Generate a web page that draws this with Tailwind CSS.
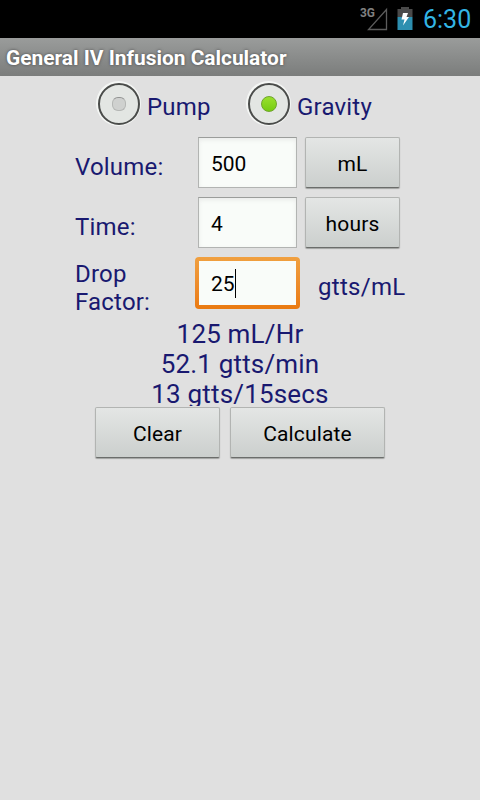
<!DOCTYPE html>
<html lang="en">
<head>
<meta charset="utf-8">
<title>General IV Infusion Calculator</title>
<script src="https://cdn.jsdelivr.net/npm/@tailwindcss/browser@4"></script>
</head>
<body class="w-[480px] h-[800px] overflow-hidden bg-[#e0e0e0] font-[Roboto,sans-serif] text-[#191970]">
<header class="h-[38px] bg-black flex items-center pl-[360px]">
  <svg class="w-[62px] h-[38px] shrink-0" viewBox="0 0 62 38">
    <text x="0" y="17" font-size="13" font-weight="700" fill="#808080" textLength="15" lengthAdjust="spacingAndGlyphs">3G</text>
    <path d="M8.500 29.500H26.500V9.500Z" fill="none" stroke="#5c5c5c" stroke-width="1.300"/>
    <path d="M37.500 9H41V7H49V9H52.500V17H37.500Z" fill="#4a4a4a"/>
    <path d="M37.500 17H52.500V30H37.500Z" fill="#2d8fb0"/>
    <path d="M43 13H48L46.500 17H49L43 25.500L44.500 19.500H41.500Z" fill="#fff"/>
  </svg>
  <span class="text-[25px] leading-[38px] text-[#33b5e5] ml-[1px] mt-[2px]">6:30</span>
</header>
<div class="h-[38px] bg-linear-to-b from-[#9a9c9b] to-[#7b7d7c] pl-[6px] text-white font-bold text-[20.900px] leading-[40px] whitespace-nowrap [text-shadow:0_0_3px_#444]">General IV Infusion Calculator</div>
<main class="flex flex-col">
  <div class="h-[56px] flex pl-[96px] pt-[5px]">
    <label class="w-[150px] flex">
      <span class="size-[45px] rounded-full bg-[#f4f6f4] p-[1.500px]"><span class="size-[42px] rounded-full border-2 border-[#4a4c4a] bg-[#e3e6e3] flex items-center justify-center"><span class="size-[14px] rounded-[6px] bg-[#cfd1cf] border border-[#b5b7b5] border-t-[#929492]"></span></span></span>
      <span class="ml-[6px] text-[24px] leading-[52px] tracking-[0.200px]">Pump</span>
    </label>
    <label class="flex">
      <span class="size-[45px] rounded-full bg-[#f4f6f4] p-[1.500px]"><span class="size-[42px] rounded-full border-2 border-[#4a4c4a] bg-[#e3e6e3] flex items-center justify-center"><span class="size-[16px] rounded-full bg-linear-to-b from-[#99e02c] to-[#76cc10] border border-[#6fa52c]"></span></span></span>
      <span class="ml-[6px] text-[24px] leading-[52px] tracking-[0.200px]">Gravity</span>
    </label>
  </div>
  <div class="h-[60px] flex pl-[75px] pt-[5px]">
    <div class="w-[123px] text-[24px] leading-[60px] tracking-[0.200px]">Volume:</div>
    <div class="w-[99px] h-[51px] bg-[#f9fcf9] border border-[#b2b4b2] border-t-[#9b9d9b] shadow-[inset_0_2px_4px_#e9ebe9] pl-[12px] text-black text-[21px] leading-[53px]">500</div>
    <button class="ml-[8px] w-[95px] h-[51px] rounded-[2px] border border-[#b2b4b2] border-b-[#6b6d6b] shadow-[0_1px_1px_#a0a2a0] bg-linear-to-b from-[#e4e6e5] to-[#cbcfcd] text-black text-[21px] tracking-[0.150px] pt-[4px]">mL</button>
  </div>
  <div class="h-[60px] flex pl-[75px] pt-[5px]">
    <div class="w-[123px] text-[24px] leading-[60px] tracking-[0.200px]">Time:</div>
    <div class="w-[99px] h-[51px] bg-[#f9fcf9] border border-[#b2b4b2] border-t-[#9b9d9b] shadow-[inset_0_2px_4px_#e9ebe9] pl-[12px] text-black text-[21px] leading-[53px]">4</div>
    <button class="ml-[8px] w-[95px] h-[51px] rounded-[2px] border border-[#b2b4b2] border-b-[#6b6d6b] shadow-[0_1px_1px_#a0a2a0] bg-linear-to-b from-[#e4e6e5] to-[#cbcfcd] text-black text-[21px] tracking-[0.150px] pt-[4px]">hours</button>
  </div>
  <div class="h-[66px] flex pl-[75px] pt-[5px]">
    <div class="w-[120px] text-[24px] leading-[28px] tracking-[0.200px] pt-[3px]">Drop<br>Factor:</div>
    <div class="w-[105px] h-[52px] rounded-[4px] bg-linear-to-b from-[#f0a040] to-[#ea7a10] p-[4px]"><div class="h-full bg-[#f9fcf9] pl-[12px] flex items-center text-black text-[21px] leading-[44px]"><span class="pt-[2px]">25</span><span class="w-px h-[29px] bg-black"></span></div></div>
    <div class="ml-[18px] text-[24px] leading-[60px] tracking-[0.300px]">gtts/mL</div>
  </div>
  <div class="h-[88px] overflow-hidden text-center text-[26px] leading-[30px] tracking-[0.180px] pt-[1px]">125 mL/Hr<br>52.1 gtts/min<br>13 gtts/15secs</div>
  <div class="flex pl-[95px] gap-[10px] pt-[1px]">
    <button class="w-[125px] h-[51px] rounded-[2px] border border-[#b2b4b2] border-b-[#6b6d6b] shadow-[0_1px_1px_#a0a2a0] bg-linear-to-b from-[#e4e6e5] to-[#cbcfcd] text-black text-[21px] tracking-[0.150px] pt-[4px]">Clear</button>
    <button class="w-[155px] h-[51px] rounded-[2px] border border-[#b2b4b2] border-b-[#6b6d6b] shadow-[0_1px_1px_#a0a2a0] bg-linear-to-b from-[#e4e6e5] to-[#cbcfcd] text-black text-[21px] tracking-[0.150px] pt-[4px]">Calculate</button>
  </div>
</main>
</body>
</html>
